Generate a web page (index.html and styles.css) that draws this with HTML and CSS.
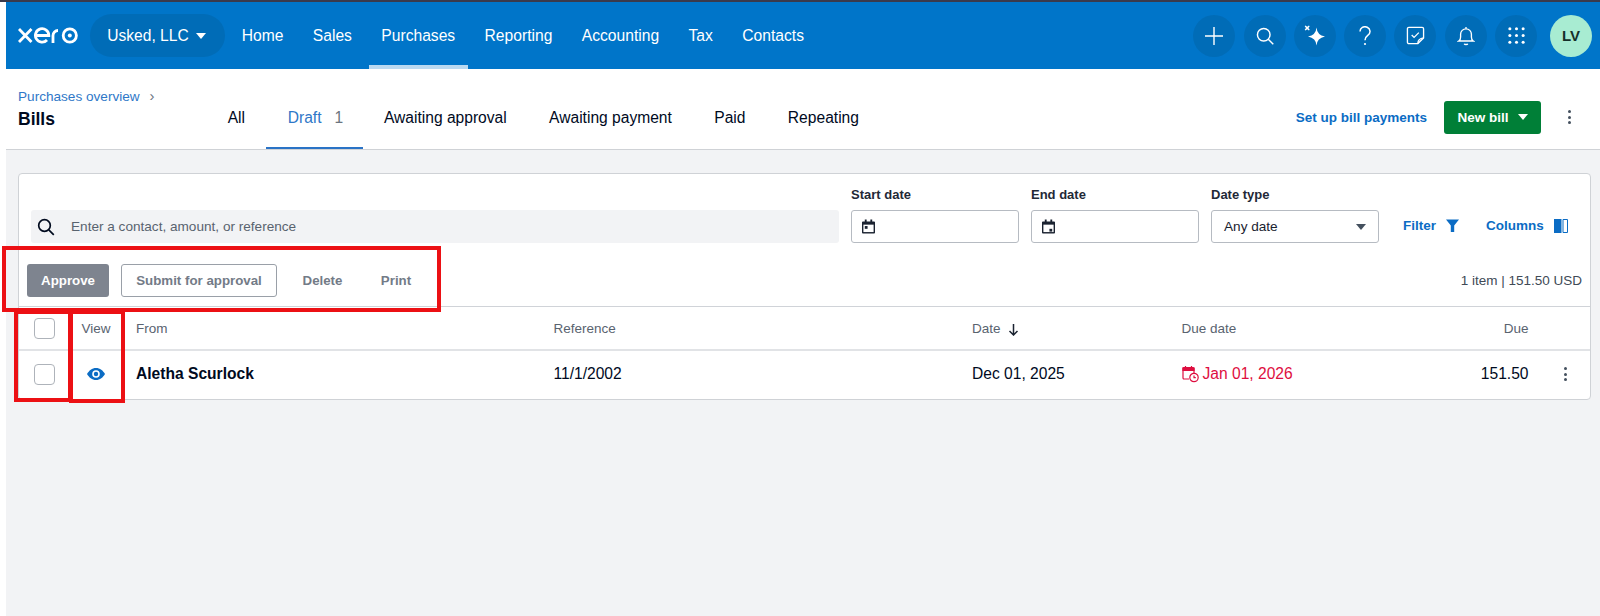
FILE: index.html
```html
<!DOCTYPE html>
<html lang="en">
<head>
<meta charset="utf-8">
<title>Bills</title>
<link rel="stylesheet" href="styles.css">
</head>
<body>
<div class="topline"></div>
<div class="app">
  <header class="nav">
    <svg class="logo" width="60" height="17" viewBox="0 0 60 17" fill="none" stroke="#fff" stroke-width="2.8" aria-label="xero">
      <path d="M1 2 13.500 15M13.500 2 1 15"/>
      <path d="M17.500 8.500h13.300a6.700 6.700 0 1 0-1.800 4.500"/>
      <path d="M35 16V8.500a5 5 0 0 1 5-5"/>
      <circle cx="51.800" cy="8.500" r="6.600"/>
      <circle cx="51.800" cy="8.500" r="2" fill="#fff" stroke="none"/>
    </svg>
    <button class="org">Usked, LLC <span class="caret"></span></button>
    <nav class="menu">
      <a>Home</a><a>Sales</a><a class="active">Purchases</a><a>Reporting</a><a>Accounting</a><a>Tax</a><a>Contacts</a>
    </nav>
    <div class="tools">
      <span class="tool"><svg width="20" height="20" viewBox="0 0 20 20" fill="none" stroke="#fff" stroke-width="1.400"><path d="M10 1v18M1 10h18"/></svg></span>
      <span class="tool"><svg width="18" height="18" viewBox="0 0 20 20" fill="none" stroke="#fff" stroke-width="1.600"><circle cx="8.600" cy="8.600" r="7"/><path d="m13.600 13.600 5.600 5.600"/></svg></span>
      <span class="tool"><svg width="24" height="24" viewBox="0 0 24 24" fill="#fff"><path d="M13.500 3.500Q14 11 22 12.500 14 14 13.500 21.500 13 14 5 12.500 13 11 13.500 3.500z"/><path d="m2.500 1.500 1.700 1.300 1.700-1.300.8.800-1.300 1.700 1.300 1.700-.8.800-1.700-1.300-1.700 1.300-.8-.8 1.300-1.700-1.300-1.700z"/></svg></span>
      <span class="tool"><svg width="12" height="20" viewBox="0 0 12 20" fill="none" stroke="#fff" stroke-width="1.500"><path d="M1 5.500a5 4.700 0 1 1 8 3.700c-2 1.500-3 2.300-3 5"/><circle cx="6" cy="18" r="1.100" fill="#fff" stroke="none"/></svg></span>
      <span class="tool"><svg width="19" height="19" viewBox="0 0 20 20" fill="none" stroke="#fff" stroke-width="1.400"><path d="M3 1.500h14a1.500 1.500 0 0 1 1.500 1.500v9.500l-6 6H3A1.500 1.500 0 0 1 1.500 17V3A1.500 1.500 0 0 1 3 1.500z"/><path d="m6 9.500 2.500 2.500 5-5M12.500 18.500c0-3 2-5.500 6-6"/></svg></span>
      <span class="tool"><svg width="18" height="20" viewBox="0 0 20 22" fill="none" stroke="#fff" stroke-width="1.500"><path d="M2 16.500c1.500-1 2-2 2-4.500V9a6 6 0 0 1 12 0v3c0 2.500.5 3.500 2 4.500z"/><path d="M10 1v2M8 19.500c.5 1.300 3.500 1.300 4 0"/></svg></span>
      <span class="tool"><svg width="19" height="19" viewBox="0 0 20 20" fill="#fff"><circle cx="3" cy="3" r="1.600"/><circle cx="10" cy="3" r="1.600"/><circle cx="17" cy="3" r="1.600"/><circle cx="3" cy="10" r="1.600"/><circle cx="10" cy="10" r="1.600"/><circle cx="17" cy="10" r="1.600"/><circle cx="3" cy="17" r="1.600"/><circle cx="10" cy="17" r="1.600"/><circle cx="17" cy="17" r="1.600"/></svg></span>
      <span class="avatar">LV</span>
    </div>
  </header>

  <section class="subhead">
    <div class="crumbs">
      <a class="crumb">Purchases overview <span class="chev">&#8250;</span></a>
      <h1>Bills</h1>
    </div>
    <div class="tabs">
      <a>All</a>
      <a class="current">Draft <span class="count">1</span></a>
      <a>Awaiting approval</a>
      <a>Awaiting payment</a>
      <a>Paid</a>
      <a>Repeating</a>
    </div>
    <a class="setup">Set up bill payments</a>
    <button class="newbill">New bill <span class="caret"></span></button>
    <span class="kebab dark"><i></i><i></i><i></i></span>
  </section>

  <main class="page">
    <div class="card">
      <div class="filters">
        <div class="search">
          <svg width="18" height="18" viewBox="0 0 18 18" fill="none" stroke="#000a1e" stroke-width="1.700"><circle cx="7.500" cy="7.500" r="5.800"/><path d="m11.800 11.800 5 5"/></svg>
          <span>Enter a contact, amount, or reference</span>
        </div>
        <div class="field">
          <label>Start date</label>
          <div class="input"><svg class="cal" width="13" height="15" viewBox="0 0 14 15"><path d="M3 0h2v2h4V0h2v2h2a1 1 0 0 1 1 1v11a1 1 0 0 1-1 1H1a1 1 0 0 1-1-1V3a1 1 0 0 1 1-1h2z" fill="#1a2230"/><path d="M1.500 5.500h11v8h-11z" fill="#fff"/><path d="M3 7h3v3H3z" fill="#1a2230"/></svg></div>
        </div>
        <div class="field">
          <label>End date</label>
          <div class="input"><svg class="cal" width="13" height="15" viewBox="0 0 14 15"><path d="M3 0h2v2h4V0h2v2h2a1 1 0 0 1 1 1v11a1 1 0 0 1-1 1H1a1 1 0 0 1-1-1V3a1 1 0 0 1 1-1h2z" fill="#1a2230"/><path d="M1.500 5.500h11v8h-11z" fill="#fff"/><path d="M8 10h3v3H8z" fill="#1a2230"/></svg></div>
        </div>
        <div class="field">
          <label>Date type</label>
          <div class="input select">Any date <span class="caret grey"></span></div>
        </div>
        <a class="link filter">Filter <svg width="13" height="13" viewBox="0 0 13 13" fill="#0b6cc4"><path d="M0 .5h13L8.200 6.500V13H4.800V6.500z"/></svg></a>
        <a class="link columns">Columns <svg width="14" height="14" viewBox="0 0 14 14"><path d="M0 0h7.500v14H0z" fill="#0b6cc4"/><path d="M9 .5h4.500v13H9z" fill="#fff" stroke="#0b6cc4"/></svg></a>
      </div>
      <div class="actions">
        <button class="btn approve">Approve</button>
        <button class="btn submit">Submit for approval</button>
        <button class="btn plain">Delete</button>
        <button class="btn plain">Print</button>
        <span class="total">1 item | 151.50 USD</span>
      </div>
      <div class="row head">
        <div class="c-check"><span class="box"></span></div>
        <div class="c-view">View</div>
        <div class="c-from">From</div>
        <div class="c-ref">Reference</div>
        <div class="c-date">Date <svg width="11" height="13" viewBox="0 0 11 13" fill="none" stroke="#1a2230" stroke-width="1.500"><path d="M5.500 1v11M1.500 8l4 4 4-4"/></svg></div>
        <div class="c-due-date">Due date</div>
        <div class="c-due">Due</div>
        <div class="c-more"></div>
      </div>
      <div class="row body">
        <div class="c-check"><span class="box"></span></div>
        <div class="c-view"><svg width="18" height="12" viewBox="0 0 18 12"><path d="M9 0c4 0 7 2.600 9 6-2 3.400-5 6-9 6s-7-2.600-9-6c2-3.400 5-6 9-6z" fill="#0b6cc4"/><circle cx="9" cy="6" r="3.800" fill="#fff"/><circle cx="9" cy="6" r="2.200" fill="#0b6cc4"/></svg></div>
        <div class="c-from name">Aletha Scurlock</div>
        <div class="c-ref">11/1/2002</div>
        <div class="c-date">Dec 01, 2025</div>
        <div class="c-due-date overdue"><svg width="18" height="18" viewBox="0 0 18 18" fill="none" stroke="#de0e40" stroke-width="1.200"><path d="M7 14H2a1 1 0 0 1-1-1V3.500a1 1 0 0 1 1-1h9a1 1 0 0 1 1 1V8"/><path d="M1 3h11v2.500H1z" fill="#de0e40"/><path d="M3.500 1v2M9.500 1v2"/><circle cx="12" cy="12.500" r="4.200"/><path d="M12 10.500v2.200h1.800"/></svg>Jan 01, 2026</div>
        <div class="c-due">151.50</div>
        <div class="c-more"><span class="kebab"><i></i><i></i><i></i></span></div>
      </div>
    </div>
  </main>
</div>
<div class="mark mark-actions"></div>
<div class="mark mark-check"></div>
<div class="mark mark-view"></div>
</body>
</html>
```
FILE: styles.css
```css
* { box-sizing: border-box; }
html, body { margin: 0; height: 616px; overflow: hidden; }
body { position: relative; background: #fff; font-family: "Liberation Sans", Arial, sans-serif; color: #000a1e; font-size: 15px; }
button { font-family: inherit; border: 0; padding: 0; }
a { text-decoration: none; color: inherit; }
.topline { height: 2px; background: #3a3a4c; }
.app { padding-left: 6px; height: 614px; display: flex; flex-direction: column; }

.nav { height: 67px; background: #0075c9; display: flex; align-items: center; padding: 0 8px 0 12px; color: #fff; }
.logo { flex: none; }
.org { margin-left: 12px; width: 135px; height: 43px; border-radius: 22px; background: #006cb7; color: #fff; font-size: 15.600px; display: flex; align-items: center; justify-content: center; gap: 7px; padding-right: 2px; }
.caret { display: inline-block; width: 0; height: 0; border-left: 5.500px solid transparent; border-right: 5.500px solid transparent; border-top: 6px solid #fff; }
.caret.grey { border-top-color: #44505e; margin-left: auto; }
.menu { display: flex; height: 100%; margin-left: 2px; }
.menu a { padding: 0 14.700px; font-size: 15.650px; display: flex; align-items: center; position: relative; }
.menu a.active::after { content: ""; position: absolute; left: 2px; right: 2px; bottom: 0; height: 4px; background: #b9d9f1; }
.tools { margin-left: auto; display: flex; align-items: center; gap: 8.300px; }
.tool { width: 42px; height: 42px; border-radius: 50%; background: #006cb7; display: flex; align-items: center; justify-content: center; }
.avatar { width: 42px; height: 42px; border-radius: 50%; background: #a8ecd2; color: #16302a; font-weight: 700; font-size: 15px; display: flex; align-items: center; justify-content: center; margin-left: 4.700px; }

.subhead { height: 81px; background: #fff; border-bottom: 1px solid #cfd2d6; display: flex; align-items: center; padding: 16px 29px 0 12px; flex: none; }
.crumbs { width: 188px; align-self: flex-start; padding-top: 2px; }
.crumb { display: block; color: #2f78c8; font-size: 13.600px; line-height: 18px; }
.chev { color: #6b7480; margin-left: 6px; font-size: 15px; }
h1 { margin: 3px 0 0; font-size: 17.500px; line-height: 20px; font-weight: 700; }
.tabs { display: flex; height: 80px; margin-top: -16px; padding-left: .5px; }
.tabs a { padding: 18px 21.200px 0; height: 100%; display: flex; align-items: center; font-size: 15.600px; }
.tabs a.current { color: #2f78c8; border-bottom: 2px solid #2a73c6; padding: 20px 19.500px 0 21.500px; }
.count { color: #6b7480; margin-left: 13px; }
.setup { margin-left: auto; color: #0b6cc4; font-weight: 700; font-size: 13.500px; }
.newbill { margin-left: 17px; width: 97px; height: 33px; background: #007f37; border-radius: 3px; color: #fff; font-weight: 700; font-size: 13.500px; display: flex; align-items: center; justify-content: center; gap: 9px; }
.kebab { display: inline-flex; flex-direction: column; gap: 2.500px; align-items: center; }
.kebab i { width: 3px; height: 3px; border-radius: 50%; background: #44505e; display: block; }
.subhead .kebab { margin-left: 27px; }

.page { flex: 1; background: #f2f3f5; padding: 23px 9px 0 12px; }
.card { background: #fff; border: 1px solid #cfd2d6; border-radius: 4px; height: 227px; display: flex; flex-direction: column; }
.filters { display: flex; height: 69px; padding: 0 13px 0 12px; align-items: flex-end; flex: none; }
.search { width: 808px; height: 33px; background: #f2f3f5; border-radius: 3px; display: flex; align-items: center; padding-left: 6px; gap: 16px; color: #59636f; font-size: 13.600px; }
.search svg { flex: none; }
.field { margin-left: 12px; width: 168px; }
.field label { display: block; font-size: 13px; font-weight: 700; color: #1f2937; line-height: 16px; margin-bottom: 7px; }
.input { height: 33px; border: 1px solid #b6bbc2; border-radius: 3px; padding: 0 12px 0 10px; display: flex; align-items: center; font-size: 13.600px; color: #1a2230; background: #fff; }
.select { padding-left: 12px; }
.link { color: #0b6cc4; font-weight: 700; font-size: 13.500px; height: 33px; display: flex; align-items: center; gap: 10px; padding-bottom: 2px; }
.filter { margin-left: 24px; }
.columns { margin-left: 27px; }

.actions { height: 63px; display: flex; align-items: center; padding: 12px 8px 0; flex: none; }
.btn { height: 33px; font-size: 13.300px; font-weight: 700; border-radius: 3px; background: transparent; color: #737b87; }
.approve { width: 82px; background: #7e848f; color: #fff; }
.submit { width: 156px; margin-left: 12px; border: 1px solid #9aa0a8; }
.plain { width: 62px; margin-left: 14.500px; }
.plain + .plain { width: 53px; margin-left: 16px; }
.total { margin-left: auto; font-size: 13.500px; color: #404a56; }

.row { display: grid; grid-template-columns: 51px 66px 417.500px 418.500px 209.500px 1fr 60px 61.500px; align-items: center; border-top: 1px solid #d8dade; flex: none; }
.head { height: 43px; font-size: 13.500px; color: #59636f; border-top-color: #d0d3d8; }
.body { height: 49px; font-size: 15.600px; border-top: 2px solid #e1e3e6; padding-bottom: 1px; }
.c-check { display: flex; justify-content: center; }
.box { width: 21px; height: 21px; border: 1px solid #aeb3ba; border-radius: 4px; background: #fff; display: block; }
.c-view { display: flex; justify-content: center; padding-right: 14px; }
.c-date { display: flex; align-items: center; gap: 7px; }
.head .c-date svg { margin-top: 2px; }
.c-due { text-align: right; }
.name { font-weight: 700; }
.overdue { color: #de0e40; display: flex; align-items: center; gap: 3px; }
.c-more { display: flex; padding-left: 35px; }

.mark { position: absolute; border: 4px solid #ec1014; }
.mark-actions { left: 2px; top: 246px; width: 439px; height: 66px; }
.mark-check { left: 14px; top: 310px; width: 58px; height: 92px; }
.mark-view { left: 69px; top: 310px; width: 56px; height: 93px; }
```
